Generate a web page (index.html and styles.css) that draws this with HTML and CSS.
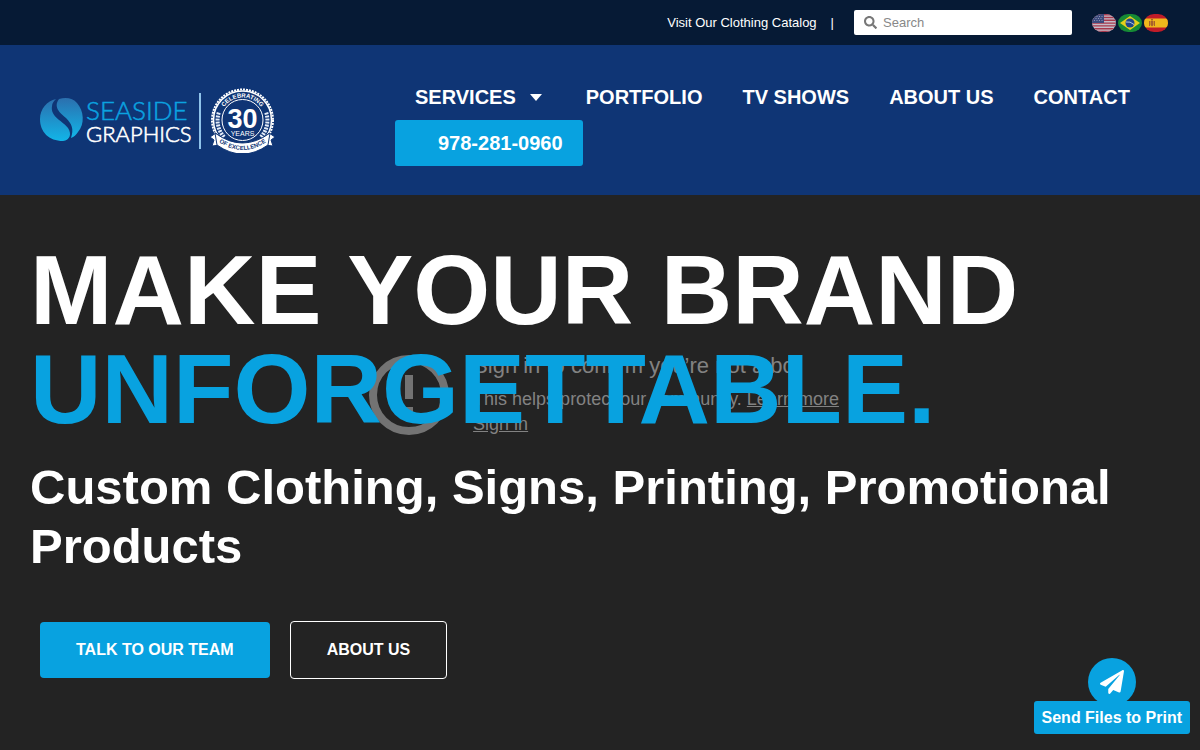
FILE: index.html
```html
<!DOCTYPE html>
<html lang="en">

<head>
    <meta charset="UTF-8">
    <meta name="viewport" content="width=device-width, initial-scale=1.0">
    <title>Seaside Graphics</title>
    <link rel="stylesheet" href="styles.css">
</head>

<body>
    <div class="topbar">
        <a href="#catalog" class="catalog">Visit Our Clothing Catalog</a>
        <span class="divider">|</span>
        <form class="search" role="search">
            <svg viewBox="0 0 512 512" aria-hidden="true">
                <path fill="#777" d="M505 442.700L405.300 343c-4.500-4.500-10.600-7-17-7H372c27.600-35.300 44-79.700 44-128C416 93.100 322.900 0 208 0S0 93.100 0 208s93.100 208 208 208c48.300 0 92.700-16.400 128-44v16.300c0 6.400 2.500 12.500 7 17l99.700 99.700c9.400 9.400 24.600 9.400 33.900 0l28.300-28.300c9.400-9.400 9.400-24.600.1-34zM208 336c-70.700 0-128-57.200-128-128 0-70.700 57.200-128 128-128 70.700 0 128 57.200 128 128 0 70.700-57.200 128-128 128z"/>
            </svg>
            <input type="search" placeholder="Search" aria-label="Search">
        </form>
        <div class="flags">
            <a href="#en" aria-label="English">
                <svg viewBox="0 0 24 18">
                    <clipPath id="pill"><rect width="24" height="18" rx="10" ry="9"/></clipPath>
                    <g clip-path="url(#pill)">
                        <rect width="24" height="18" fill="#c4bcc8"/>
                        <path stroke="#a8384c" stroke-width="1.400" d="M0 .7h24M0 3.500h24M0 6.300h24M0 9.100h24M0 11.900h24M0 14.700h24M0 17.500h24"/>
                        <rect width="12" height="9" fill="#3c4a7c"/>
                        <path stroke="#8c94b4" stroke-dasharray="1 1.500" d="M2 2.500h9M1 4.500h10M2 6.500h9"/>
                    </g>
                </svg>
            </a>
            <a href="#pt" aria-label="Português">
                <svg viewBox="0 0 24 18">
                    <g clip-path="url(#pill)">
                        <rect width="24" height="18" fill="#168a35"/>
                        <path fill="#e4d01c" d="M12 2l10 7-10 7L2 9z"/>
                        <circle cx="12" cy="9" r="4.500" fill="#20458c"/>
                        <path fill="none" stroke="#b4c4dc" d="M8 8q4-1 8 2.500"/>
                    </g>
                </svg>
            </a>
            <a href="#es" aria-label="Español">
                <svg viewBox="0 0 24 18">
                    <g clip-path="url(#pill)">
                        <rect width="24" height="18" fill="#c01c28"/>
                        <rect y="4.500" width="24" height="9" fill="#f0b81c"/>
                        <path fill="#a8602c" d="M5 7h1v5H5zM10 7h1v5h-1zM6.500 7h3v4l-1.500 1.500L6.500 11zM7 5h2v1.500H7z"/>
                    </g>
                </svg>
            </a>
        </div>
    </div>

    <header class="header">
        <a href="#home" class="logo" aria-label="Seaside Graphics">
            <svg viewBox="0 0 236 66">
                <defs>
                    <linearGradient id="drop" x1="0" y1="0" x2="0" y2="1">
                        <stop offset="0" stop-color="#2b6fae"/>
                        <stop offset="1" stop-color="#12b5e8"/>
                    </linearGradient>
                    <path id="arcTop" d="M180 33a22.500 22.500 0 0 1 45 0"/>
                    <path id="arcBottom" d="M176 53Q202.500 73 229 53"/>
                </defs>
                <path fill="url(#drop)" d="M16 12C7 14 0 22 0 32c0 13 9 22 23 22 7-1 9-7 5-13-5-7-18-11-16-22 0-3 2-5 4-7z"/>
                <path fill="url(#drop)" d="M19 12c7-2 14-1 18 4 7 8 8 21 1 29-2 3-4 5-7 6 3-9 1-14-5-20-6-5-13-11-7-19z"/>
                <text class="logo-sea" x="46" y="33" stroke-width=".5">SEASIDE</text>
                <text class="logo-gra" x="46" y="55" stroke-width=".6">GRAPHICS</text>
                <path stroke="#8fc3ea" stroke-width="2" d="M160 6v56"/>
                <circle cx="202.500" cy="33" r="30.500" fill="none" stroke="#fff" stroke-width="2" stroke-dasharray="2 1"/>
                <circle cx="202.500" cy="33" r="29" fill="none" stroke="#fff" stroke-width="1.500"/>
                <path fill="none" stroke="#e4ecf8" stroke-width="4" stroke-dasharray="2 1" d="M184 50A25 25 0 0 1 179 25M221 50A25 25 0 0 0 226 25"/>
                <circle cx="202.500" cy="33" r="20.500" fill="none" stroke="#fff"/>
                <text class="badge-small"><textPath href="#arcTop" startOffset="50%">CELEBRATING</textPath></text>
                <text class="badge-num" x="202.500" y="41">30</text>
                <text class="badge-years" x="202.500" y="49">YEARS</text>
                <path fill="#fff" stroke="#0f3575" d="M176 46l-6 4 4 3-2 6 9-1zM229 46l6 4-4 3 2 6-9-1z"/>
                <path fill="#fff" stroke="#0f3575" d="M175 46Q202.500 66 230 46l-2 12Q202.500 76 177 58z"/>
                <text class="badge-ribbon"><textPath href="#arcBottom" startOffset="50%">OF EXCELLENCE</textPath></text>
            </svg>
        </a>
        <nav class="nav">
            <a href="#services">SERVICES <span class="caret"></span></a>
            <a href="#portfolio">PORTFOLIO</a>
            <a href="#tv">TV SHOWS</a>
            <a href="#about">ABOUT US</a>
            <a href="#contact">CONTACT</a>
            <a href="tel:9782810960" class="phone">978-281-0960</a>
        </nav>
    </header>

    <main class="hero">
        <div class="video-error">
            <svg viewBox="0 0 80 80" aria-hidden="true">
                <circle cx="40" cy="40" r="36" fill="none" stroke="#737373" stroke-width="8"/>
                <path fill="#737373" d="M36 20h8v24h-8zM36 52h8v8h-8z"/>
            </svg>
            <div>
                <p class="error-title">Sign in to confirm you’re not a bot</p>
                <p>This helps protect our community. <a href="#learn">Learn more</a></p>
                <p><a href="#signin">Sign in</a></p>
            </div>
        </div>
        <div class="hero-content">
            <h1>MAKE YOUR BRAND <span>UNFORGETTABLE.</span></h1>
            <h2>Custom Clothing, Signs, Printing, Promotional Products</h2>
            <div class="actions">
                <a href="#team" class="btn btn-blue">TALK TO OUR TEAM</a>
                <a href="#about" class="btn btn-line">ABOUT US</a>
            </div>
        </div>
    </main>

    <a href="#upload" class="send">
        <span class="send-icon">
            <svg viewBox="0 0 512 512" aria-hidden="true">
                <path fill="#fff" d="M476 3.200L12.500 270.600c-18.100 10.400-15.800 35.600 2.200 43.200L121 358.400l287.300-253.200c5.500-4.900 13.300 2.600 8.600 8.300L176 407v80.500c0 23.600 28.500 32.900 42.500 15.800L282 426l124.600 52.200c14.200 6 30.400-2.900 33-18.200l72-432C515 7.800 493.300-6.800 476 3.200z"/>
            </svg>
        </span>
        <span class="send-label">Send Files to Print</span>
    </a>
</body>

</html>
```
FILE: styles.css
```css
* {
    box-sizing: border-box;
}

body {
    margin: 0;
    min-height: 100vh;
    display: flex;
    flex-direction: column;
    font-family: "Liberation Sans", Arial, sans-serif;
    color: #fff;
    background-color: #232323;
}

a {
    color: inherit;
    text-decoration: none;
}

svg {
    display: block;
}

h1,
h2,
p {
    margin: 0;
}

.topbar {
    display: flex;
    align-items: center;
    justify-content: flex-end;
    height: 45px;
    padding: 0 32px;
    font-size: 13px;
    background-color: #061a35;
}

.divider {
    margin: 0 20px 0 14px;
}

.search {
    display: flex;
    align-items: center;
    gap: 6px;
    width: 218px;
    height: 25px;
    padding: 0 10px;
    border-radius: 2px;
    background-color: #fff;
}

.search svg {
    width: 13px;
    height: 13px;
}

.search input {
    flex: 1;
    min-width: 0;
    padding: 0;
    border: 0;
    outline: 0;
    font: inherit;
    background: none;
}

.search input::placeholder {
    color: #888;
}

.flags {
    display: flex;
    gap: 2px;
    margin-left: 20px;
}

.flags svg {
    width: 24px;
    height: 18px;
}

.header {
    display: flex;
    align-items: center;
    min-height: 150px;
    padding: 0 40px;
    background-color: #0f3575;
}

.logo {
    width: 355px;
    flex-shrink: 0;
}

.logo svg {
    width: 236px;
    height: 66px;
}

.logo-sea,
.logo-gra {
    font-family: Lato, sans-serif;
    font-size: 26px;
    font-weight: 300;
    fill: #0ba3e0;
    stroke: #0ba3e0;
}

.logo-gra {
    font-size: 22px;
    fill: #fff;
    stroke: #fff;
}

.badge-small,
.badge-num,
.badge-years,
.badge-ribbon {
    font-weight: bold;
    text-anchor: middle;
    fill: #fff;
}

.badge-small {
    font-size: 6px;
}

.badge-num {
    font-size: 27px;
}

.badge-years {
    font-size: 7px;
    font-weight: normal;
}

.badge-ribbon {
    font-size: 6px;
    fill: #0f3575;
}

.nav {
    display: flex;
    flex-wrap: wrap;
    font-size: 20px;
    font-weight: bold;
    line-height: 46px;
}

.nav a {
    display: flex;
    align-items: center;
    padding: 0 20px;
}

.caret {
    margin: 0 4px 0 14px;
    border: 6px solid transparent;
    border-top: 7px solid #fff;
    border-bottom: 0;
}

.nav .phone {
    padding-left: 43px;
    border-radius: 3px;
    background-color: #08a2e0;
}

.hero {
    position: relative;
    flex: 1;
    padding: 45px 30px 70px;
}

/* player message shows through behind the headline */
.video-error {
    position: absolute;
    top: 158px;
    left: 8px;
    right: 0;
    display: flex;
    align-items: center;
    justify-content: center;
    gap: 24px;
    font-size: 18px;
    line-height: 25px;
    color: #828282;
}

.video-error svg {
    width: 80px;
    height: 80px;
}

.video-error a {
    text-decoration: underline;
}

.video-error .error-title {
    margin-bottom: 9px;
    font-size: 22px;
}

.hero-content {
    position: relative;
}

h1 {
    font-size: 99px;
    line-height: 99px;
}

h1 span {
    display: block;
    color: #08a2e0;
}

h2 {
    margin-top: 20px;
    font-size: 49px;
    line-height: 59px;
}

.actions {
    display: flex;
    align-items: center;
    gap: 20px;
    margin: 45px 10px 0;
}

.btn {
    padding: 0 36px;
    border-radius: 4px;
    font-size: 16px;
    font-weight: bold;
    line-height: 56px;
}

.btn-blue {
    background-color: #08a2e0;
}

.btn-line {
    border: 1px solid #fff;
}

.send {
    position: fixed;
    right: 10px;
    bottom: 16px;
    display: flex;
    flex-direction: column;
    align-items: center;
}

.send-icon {
    display: flex;
    align-items: center;
    justify-content: center;
    width: 48px;
    height: 48px;
    margin-bottom: -5px;
    border-radius: 50%;
    background-color: #08a2e0;
}

.send-icon svg {
    width: 24px;
    height: 24px;
}

.send-label {
    padding: 0 8px;
    border-radius: 3px;
    font-size: 16px;
    font-weight: bold;
    line-height: 33px;
    background-color: #08a2e0;
}
```
